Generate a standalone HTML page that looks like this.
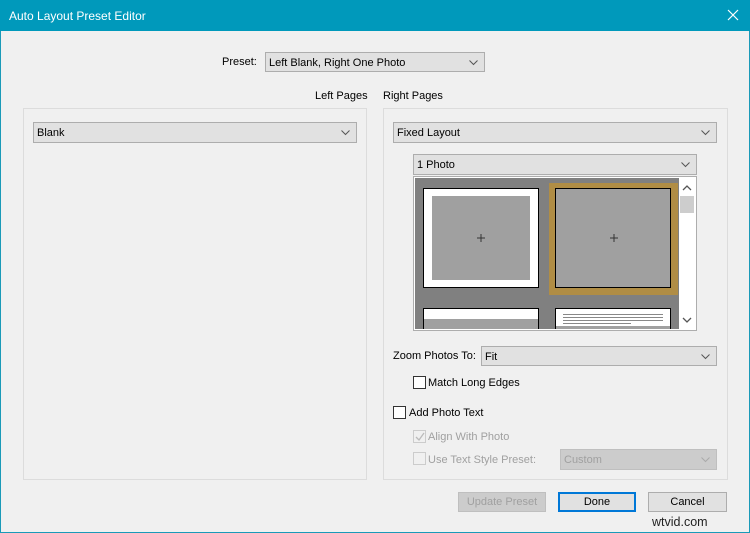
<!DOCTYPE html>
<html><head><style>
*{margin:0;padding:0;box-sizing:border-box}
body{width:750px;height:533px;background:#f0f0f0;font-family:"Liberation Sans",sans-serif;font-size:11px;color:#000;position:relative;overflow:hidden}
.a{position:absolute}
.frame{left:0;top:0;width:750px;height:533px;border:1px solid #1a9ab8}
.title{left:0;top:0;width:750px;height:31px;background:#0099bb;color:#fff;font-size:12px}
.sel{position:absolute;background:#e1e1e1;border:1px solid #adadad;padding-left:3px;line-height:20px;white-space:nowrap}
.sel svg{position:absolute;right:6px;top:7px}
.panel{position:absolute;border:1px solid #dcdcdc}
.cb{position:absolute;width:13px;height:13px;border:1px solid #333;background:#fff}
.btn{position:absolute;height:20px;border:1px solid #adadad;background:#e1e1e1;text-align:center;line-height:19px}
.dis{color:#a0a0a0}
</style></head><body>
<div class="a frame"></div>
<div class="a title"><span class="a" style="left:9px;top:9px">Auto Layout Preset Editor</span>
<svg class="a" style="left:727px;top:9px" width="12" height="12"><path d="M1 1L11 11M11 1L1 11" stroke="#fff" stroke-width="1.2"/></svg></div>

<span class="a" style="left:222px;top:56px">Preset:</span>
<div class="sel" style="left:265px;top:52px;width:220px;height:20px">Left Blank, Right One Photo<svg width="9" height="6"><path d="M0.5 0.5L4.5 4.5L8.5 0.5" stroke="#555" fill="none"/></svg></div>

<span class="a" style="left:315px;top:90px">Left Pages</span>
<span class="a" style="left:383px;top:90px">Right Pages</span>

<div class="panel" style="left:23px;top:108px;width:344px;height:372px"></div>
<div class="panel" style="left:383px;top:108px;width:345px;height:372px"></div>

<div class="sel" style="left:33px;top:122px;width:324px;height:21px">Blank<svg width="9" height="6"><path d="M0.5 0.5L4.5 4.5L8.5 0.5" stroke="#555" fill="none"/></svg></div>
<div class="sel" style="left:393px;top:122px;width:324px;height:21px">Fixed Layout<svg width="9" height="6"><path d="M0.5 0.5L4.5 4.5L8.5 0.5" stroke="#555" fill="none"/></svg></div>
<div class="sel" style="left:413px;top:154px;width:284px;height:21px">1 Photo<svg width="9" height="6"><path d="M0.5 0.5L4.5 4.5L8.5 0.5" stroke="#555" fill="none"/></svg></div>

<div class="a" style="left:413px;top:176px;width:284px;height:155px;border:1px solid #adadad;background:#fff"></div>
<div class="a" style="left:415px;top:178px;width:264px;height:151px;background:#808080;overflow:hidden">
 <div class="a" style="left:8px;top:10px;width:116px;height:100px;background:#fff;border:1px solid #000"><div class="a" style="left:8px;top:7px;width:98px;height:84px;background:#a0a0a0"></div>
  <svg class="a" style="left:53px;top:45px" width="8" height="8"><path d="M4 0V8M0 4H8" stroke="#333"/></svg></div>
 <div class="a" style="left:134px;top:5px;width:129px;height:112px;background:#b08d45"></div>
 <div class="a" style="left:140px;top:10px;width:116px;height:100px;background:#a0a0a0;border:1px solid #000">
  <svg class="a" style="left:54px;top:45px" width="8" height="8"><path d="M4 0V8M0 4H8" stroke="#333"/></svg></div>
 <div class="a" style="left:8px;top:130px;width:116px;height:30px;background:#fff;border:1px solid #000"><div class="a" style="left:0;top:10px;width:114px;height:20px;background:#a0a0a0"></div></div>
 <div class="a" style="left:140px;top:130px;width:116px;height:30px;background:#fff;border:1px solid #000">
  <div class="a" style="left:7px;top:5px;width:100px;height:7px;border-top:1px solid #888;border-bottom:1px solid #888"></div>
  <div class="a" style="left:7px;top:8px;width:100px;height:1px;background:#888"></div>
  <div class="a" style="left:7px;top:14px;width:68px;height:1px;background:#888"></div>
  <div class="a" style="left:0;top:17px;width:114px;height:13px;background:#a0a0a0"></div></div>
</div>
<svg class="a" style="left:682px;top:185px" width="10" height="6"><path d="M1 5L5 1L9 5" stroke="#555" fill="none" stroke-width="1.3"/></svg>
<div class="a" style="left:680px;top:196px;width:14px;height:17px;background:#cdcdcd"></div>
<svg class="a" style="left:682px;top:317px" width="10" height="6"><path d="M1 1L5 5L9 1" stroke="#555" fill="none" stroke-width="1.3"/></svg>

<span class="a" style="left:393px;top:350px">Zoom Photos To:</span>
<div class="sel" style="left:481px;top:346px;width:236px;height:20px">Fit<svg width="9" height="6"><path d="M0.5 0.5L4.5 4.5L8.5 0.5" stroke="#555" fill="none"/></svg></div>

<div class="cb" style="left:413px;top:376px"></div><span class="a" style="left:428px;top:377px">Match Long Edges</span>
<div class="cb" style="left:393px;top:406px"></div><span class="a" style="left:409px;top:407px">Add Photo Text</span>
<div class="cb" style="left:413px;top:430px;border-color:#ccc;background:#f0f0f0"></div>
<svg class="a" style="left:414px;top:431px" width="12" height="12"><path d="M2 6L5 9L10 2" stroke="#bbb" fill="none" stroke-width="1.3"/></svg>
<span class="a dis" style="left:428px;top:431px">Align With Photo</span>
<div class="cb" style="left:413px;top:452px;border-color:#ccc;background:#f0f0f0"></div>
<span class="a dis" style="left:428px;top:454px">Use Text Style Preset:</span>
<div class="sel dis" style="left:560px;top:449px;width:157px;height:21px;background:#cccccc;border-color:#bfbfbf">Custom<svg width="9" height="6"><path d="M0.5 0.5L4.5 4.5L8.5 0.5" stroke="#aaa" fill="none"/></svg></div>

<div class="btn dis" style="left:458px;top:492px;width:88px;background:#ccc;border-color:#bfbfbf">Update Preset</div>
<div class="btn" style="left:558px;top:492px;width:78px;border:2px solid #0078d7;line-height:17px">Done</div>
<div class="btn" style="left:648px;top:492px;width:79px">Cancel</div>
<span class="a" style="left:652px;top:515px;font-size:12.5px;color:#222">wtvid.com</span>
</body></html>
